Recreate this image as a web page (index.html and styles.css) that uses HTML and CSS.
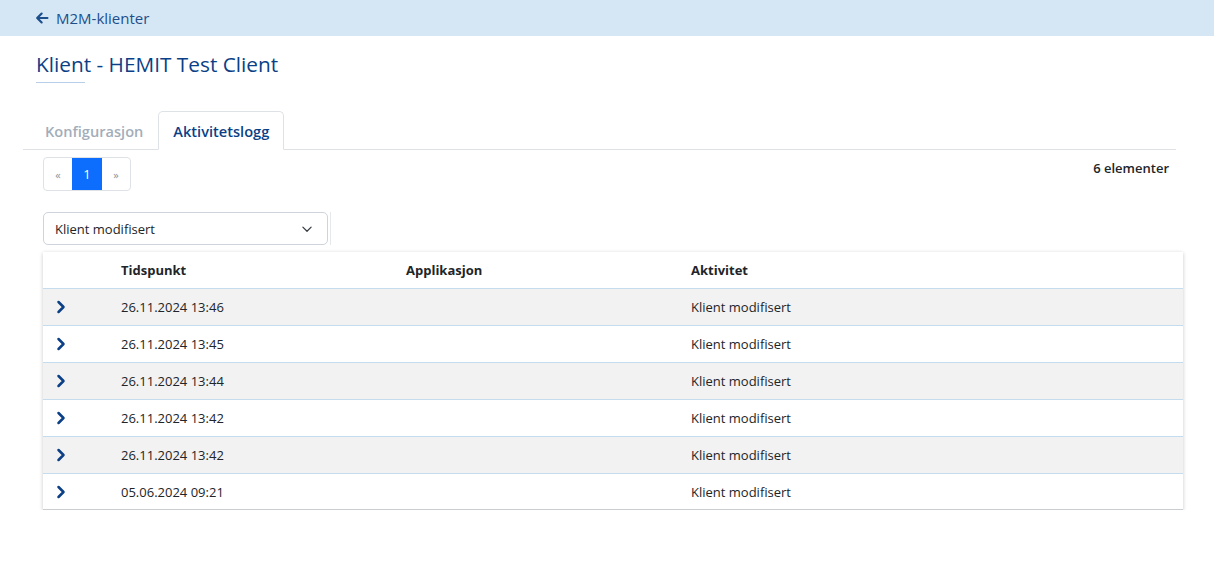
FILE: index.html
```html
<!DOCTYPE html>
<html lang="no">
<head>
<meta charset="utf-8">
<title>Klient - HEMIT Test Client</title>
<link rel="stylesheet" href="styles.css">
</head>
<body>
<header class="topbar">
  <a class="back" href="#">
    <svg class="back-icon" viewBox="0 0 16 16" width="14" height="14"><path d="M14.2 8H2.8M7.6 2.9 2.5 8l5.1 5.1" fill="none" stroke="currentColor" stroke-width="2.5" stroke-linecap="round" stroke-linejoin="round"/></svg>
    <span>M2M-klienter</span>
  </a>
</header>
<main class="page">
  <h1 class="title">Klient - HEMIT Test Client</h1>
  <div class="title-rule"></div>
  <nav class="tabs">
    <a class="tab" href="#">Konfigurasjon</a>
    <a class="tab active" href="#">Aktivitetslogg</a>
  </nav>
  <div class="content">
    <div class="toolbar">
      <ul class="pager">
        <li class="pg">«</li>
        <li class="pg current">1</li>
        <li class="pg">»</li>
      </ul>
      <div class="count">6 elementer</div>
    </div>
    <div class="filter-row">
      <div class="select">
        <span>Klient modifisert</span>
        <svg class="select-chev" viewBox="0 0 16 16" width="12" height="12"><path d="M2.5 5.5 8 11l5.5-5.5" fill="none" stroke="#343a40" stroke-width="1.6" stroke-linecap="round" stroke-linejoin="round"/></svg>
      </div>
      <div class="filter-edge"></div>
    </div>
    <div class="table">
      <div class="row head">
        <div class="c0"></div>
        <div class="c1">Tidspunkt</div>
        <div class="c2">Applikasjon</div>
        <div class="c3">Aktivitet</div>
      </div>
      <div class="row odd"><div class="c0"><svg class="chev" viewBox="0 0 10 16" width="10" height="16"><path d="M2.5 3 7.5 8l-5 5" fill="none" stroke="currentColor" stroke-width="2.5" stroke-linecap="round" stroke-linejoin="round"/></svg></div><div class="c1">26.11.2024 13:46</div><div class="c2"></div><div class="c3">Klient modifisert</div></div>
      <div class="row"><div class="c0"><svg class="chev" viewBox="0 0 10 16" width="10" height="16"><path d="M2.5 3 7.5 8l-5 5" fill="none" stroke="currentColor" stroke-width="2.5" stroke-linecap="round" stroke-linejoin="round"/></svg></div><div class="c1">26.11.2024 13:45</div><div class="c2"></div><div class="c3">Klient modifisert</div></div>
      <div class="row odd"><div class="c0"><svg class="chev" viewBox="0 0 10 16" width="10" height="16"><path d="M2.5 3 7.5 8l-5 5" fill="none" stroke="currentColor" stroke-width="2.5" stroke-linecap="round" stroke-linejoin="round"/></svg></div><div class="c1">26.11.2024 13:44</div><div class="c2"></div><div class="c3">Klient modifisert</div></div>
      <div class="row"><div class="c0"><svg class="chev" viewBox="0 0 10 16" width="10" height="16"><path d="M2.5 3 7.5 8l-5 5" fill="none" stroke="currentColor" stroke-width="2.5" stroke-linecap="round" stroke-linejoin="round"/></svg></div><div class="c1">26.11.2024 13:42</div><div class="c2"></div><div class="c3">Klient modifisert</div></div>
      <div class="row odd"><div class="c0"><svg class="chev" viewBox="0 0 10 16" width="10" height="16"><path d="M2.5 3 7.5 8l-5 5" fill="none" stroke="currentColor" stroke-width="2.5" stroke-linecap="round" stroke-linejoin="round"/></svg></div><div class="c1">26.11.2024 13:42</div><div class="c2"></div><div class="c3">Klient modifisert</div></div>
      <div class="row last"><div class="c0"><svg class="chev" viewBox="0 0 10 16" width="10" height="16"><path d="M2.5 3 7.5 8l-5 5" fill="none" stroke="currentColor" stroke-width="2.5" stroke-linecap="round" stroke-linejoin="round"/></svg></div><div class="c1">05.06.2024 09:21</div><div class="c2"></div><div class="c3">Klient modifisert</div></div>
    </div>
  </div>
</main>
</body>
</html>
```

FILE: styles.css
```css
* { box-sizing: border-box; }
html, body { margin: 0; padding: 0; background: #fff; }
body {
  font-family: "Open Sans", "Noto Sans", sans-serif;
  font-size: 13px;
  color: #212529;
}
.topbar {
  height: 36px;
  background: #d5e7f5;
  display: flex;
  align-items: center;
  padding-left: 35px;
}
.back {
  display: flex;
  align-items: center;
  gap: 7px;
  color: #1d4f8c;
  text-decoration: none;
  font-size: 15px;
}
.back-icon { display: block; }
.page { padding: 0 38px 0 23px; }
.title {
  margin: 13px 0 0 13px;
  font-size: 20.8px;
  font-weight: 500;
  color: #0b3f86;
  line-height: 30px;
}
.title-rule {
  margin: 3px 0 0 13px;
  width: 49px;
  height: 1px;
  background: #b9cfe9;
}
.tabs {
  margin-top: 28px;
  display: flex;
  align-items: flex-end;
  border-bottom: 1px solid #dee2e6;
  height: 39px;
  padding-left: 9px;
}
.tab {
  display: block;
  height: 39px;
  line-height: 38px;
  padding: 0 14px;
  font-size: 14.6px;
  font-weight: 600;
  color: #a3adba;
  text-decoration: none;
  border: 1px solid transparent;
  border-radius: 5px 5px 0 0;
  margin-bottom: -1px;
}
.tab:first-child { padding-left: 12px; }
.tab.active {
  color: #0b3f86;
  border-color: #dee2e6;
  border-bottom-color: #fff;
  background: #fff;
}
.content { padding-left: 20px; padding-right: 0; }
.toolbar {
  margin-top: 7px;
  display: flex;
  justify-content: space-between;
  align-items: flex-start;
}
.pager {
  list-style: none;
  margin: 0;
  padding: 0;
  display: flex;
  border: 1px solid #dee2e6;
  border-radius: 4px;
  height: 34px;
  overflow: hidden;
}
.pg {
  width: 28px;
  display: flex;
  align-items: center;
  justify-content: center;
  font-size: 11px;
  color: #8a939c;
}
.pg.current {
  width: 30px;
  background: #0d6efd;
  color: #fff;
  font-size: 13px;
}
.count {
  font-weight: 600;
  font-size: 13px;
  margin-top: 2px;
  margin-right: 7px;
  color: #212529;
}
.filter-row {
  margin-top: 21px;
  display: flex;
  align-items: stretch;
  gap: 2px;
}
.select {
  width: 285px;
  height: 33px;
  border: 1px solid #ced4da;
  border-radius: 5px;
  display: flex;
  align-items: center;
  justify-content: space-between;
  padding: 0 14px 0 11px;
  font-size: 13px;
  color: #212529;
}
.filter-edge { width: 1px; background: #e6e9ec; }
.table {
  margin-top: 7px;
  width: 1140px;
  box-shadow: 0 1px 4px rgba(0,0,0,0.22);
  background: #fff;
}
.row {
  display: flex;
  height: 37px;
  align-items: center;
  border-top: 1px solid #c5dbee;
}
.row.head { border-top: 0; height: 36px; font-weight: 700; }
.row.odd { background: #f2f2f2; }
.row.last { border-bottom: 1px solid #c9ced3; }
.c0 { width: 78px; padding-left: 13px; display: flex; align-items: center; }
.c1 { width: 285px; }
.c2 { width: 285px; }
.c3 { flex: 1; }
.chev { display: block; color: #0b3f86; }
```
